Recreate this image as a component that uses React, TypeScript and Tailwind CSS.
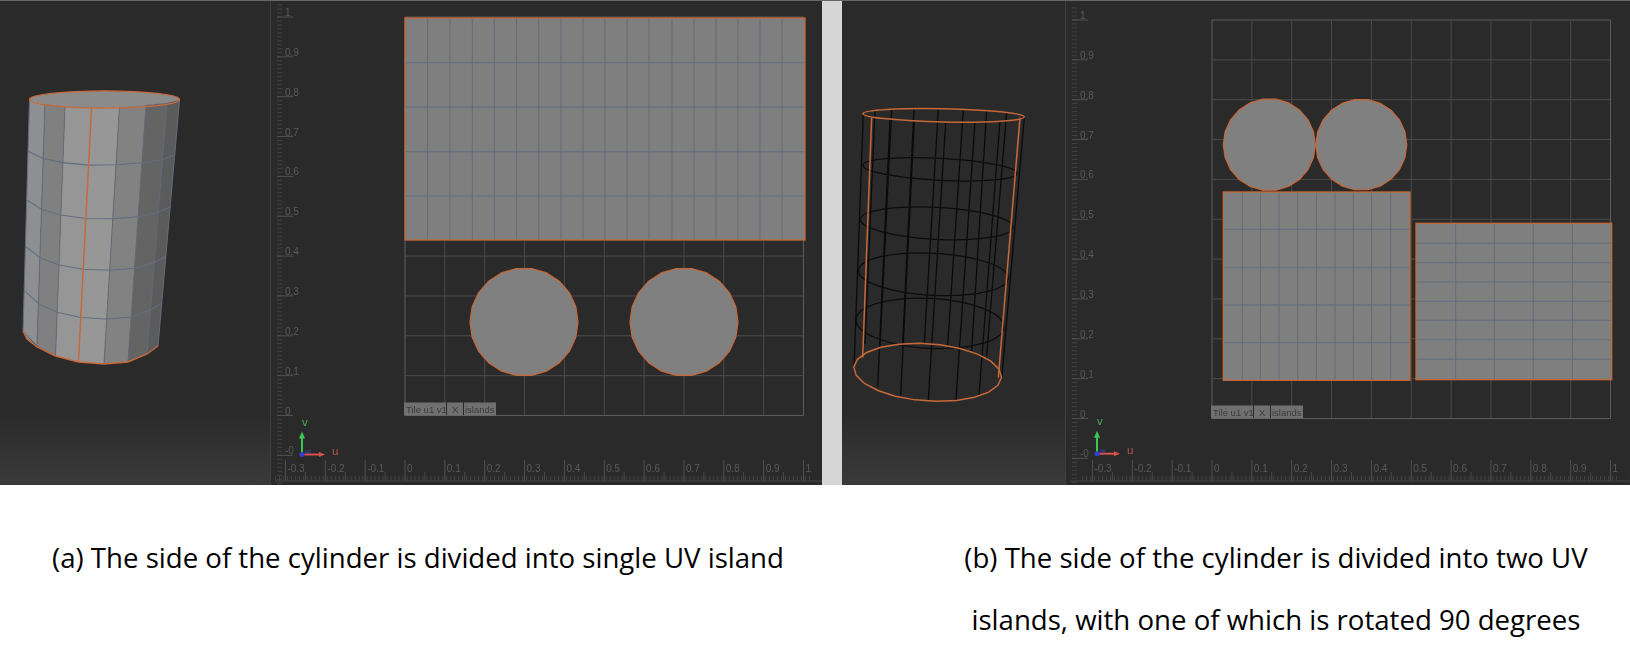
import React from "react";

const ORANGE = "#c9693a";
const BLUE = "#646c7e";

type Pt = [number, number];
const lerp = (a: Pt, b: Pt, t: number): Pt => [a[0] + (b[0] - a[0]) * t, a[1] + (b[1] - a[1]) * t];
const pts = (list: Pt[]) => list.map((p) => p.join(",")).join(" ");

function polygonCircle(cx: number, cy: number, r: number, sides = 22) {
  const out: Pt[] = [];
  for (let i = 0; i < sides; i++) {
    const a = (i / sides) * Math.PI * 2;
    out.push([cx + Math.cos(a) * r, cy + Math.sin(a) * r]);
  }
  return pts(out);
}

const range = (n: number) => [...Array(n).keys()];

// rulers + frame of the uv editor, in panel coordinates
function UvBackdrop({ left, top, panelLeft, bottom, gizmoY }: { left: number; top: number; panelLeft: number; bottom: number; gizmoY: number }) {
  const step = 39.85;
  const size = step * 10;
  const yBase = top + size;
  const labelsY = ["1", "0.9", "0.8", "0.7", "0.6", "0.5", "0.4", "0.3", "0.2", "0.1", "0"];
  const labelsX = ["-0.3", "-0.2", "-0.1", "0", "0.1", "0.2", "0.3", "0.4", "0.5", "0.6", "0.7", "0.8", "0.9", "1"];
  const rulerX = panelLeft + 7;
  const labelX = panelLeft + 15;
  return (
    <g fontFamily="'Liberation Sans', sans-serif" fontSize="10" fill="#5a5a5a">
      <line x1={panelLeft + 0.5} y1={0} x2={panelLeft + 0.5} y2={bottom} stroke="#3f3f3f" />
      {/* vertical ruler */}
      {range(125).map((i) => {
        const y = top - 12 + i * (step / 10);
        return <line key={i} x1={rulerX} x2={rulerX + 5} y1={y} y2={y} stroke="#4a4a4a" strokeWidth="0.8" />;
      })}
      {labelsY.map((l, i) => (
        <g key={l}>
          <line x1={rulerX} x2={rulerX + 16} y1={top + i * step} y2={top + i * step} stroke="#505050" />
          <text x={labelX} y={top + i * step - 1}>{l}</text>
        </g>
      ))}
      <line x1={rulerX} x2={rulerX + 16} y1={yBase + step} y2={yBase + step} stroke="#505050" />
      <text x={labelX} y={yBase + step - 1}>-0</text>
      {/* horizontal ruler */}
      {range(135).map((i) => {
        const x = left - 3 * step + i * (step / 10) - 10;
        return <line key={i} x1={x} x2={x} y1={bottom - 9} y2={bottom - 4} stroke="#4a4a4a" strokeWidth="0.8" />;
      })}
      {range(14).map((i) => (
        <line key={i} x1={left - 3 * step + (i + 0.5) * step} x2={left - 3 * step + (i + 0.5) * step} y1={bottom - 13} y2={bottom - 4} stroke="#4a4a4a" />
      ))}
      {labelsX.map((l, i) => (
        <g key={l}>
          <line x1={left + (i - 3) * step} x2={left + (i - 3) * step} y1={bottom - 25} y2={bottom - 4} stroke="#505050" />
          <text x={left + (i - 3) * step + 2} y={bottom - 13}>{l}</text>
        </g>
      ))}
      <line x1={rulerX - 2} x2={panelLeft + 565} y1={bottom - 4} y2={bottom - 4} stroke="#454545" />
      {/* 0..1 grid */}
      {range(11).map((i) => (
        <g key={i}>
          <line x1={left + i * step} x2={left + i * step} y1={top} y2={yBase} stroke={i === 0 || i === 10 ? "#5c5c5c" : "#4a4a4a"} />
          <line x1={left} x2={left + size} y1={top + i * step} y2={top + i * step} stroke={i === 0 || i === 10 ? "#5c5c5c" : "#4a4a4a"} />
        </g>
      ))}
      {/* axis gizmo */}
      <g transform={`translate(${panelLeft + 32} ${gizmoY})`}>
        <line x1="0" y1="0" x2="0" y2="-18" stroke="#3fc552" strokeWidth="2" />
        <polygon points="-3,-16 3,-16 0,-23" fill="#3fc552" />
        <line x1="0" y1="0" x2="18" y2="0" stroke="#d9504a" strokeWidth="2" />
        <polygon points="17,-2.5 17,2.5 23,0" fill="#d9504a" />
        <circle cx="0" cy="0" r="2.5" fill="#2f3fd0" />
        <text x="3" y="-1" fill="#3a45b0" fontSize="8">w</text>
        <text x="0" y="-29" fill="#4cae58" fontSize="11.5">v</text>
        <text x="30" y="0" fill="#b9504a" fontSize="11.5">u</text>
      </g>
      {/* tile bar */}
      <g fill="#707070">
        <rect x={left - 1} y={yBase - 13} width="42" height="13" />
        <rect x={left + 42} y={yBase - 13} width="16" height="13" />
        <rect x={left + 59} y={yBase - 13} width="32" height="13" />
      </g>
      <g fill="#3b3b3b" fontSize="9.5">
        <text x={left + 1} y={yBase - 3}>Tile u1 v1</text>
        <text x={left + 47} y={yBase - 3}>X</text>
        <text x={left + 60} y={yBase - 3}>islands</text>
      </g>
    </g>
  );
}

// flat island with its interior seams
function Island({ x, y, x2, y2, vs, hs }: { x: number; y: number; x2: number; y2: number; vs: number[]; hs: number[] }) {
  return (
    <g>
      <rect x={x} y={y} width={x2 - x} height={y2 - y} fill="#7f7f7f" />
      {vs.map((v) => <line key={v} x1={v} x2={v} y1={y} y2={y2} stroke={BLUE} strokeWidth="1.1" />)}
      {hs.map((h) => <line key={h} x1={x} x2={x2} y1={h} y2={h} stroke={BLUE} strokeWidth="1.1" />)}
      <rect x={x} y={y} width={x2 - x} height={y2 - y} fill="none" stroke={ORANGE} strokeWidth="1.3" />
    </g>
  );
}

function Disc({ cx, cy, r }: { cx: number; cy: number; r: number }) {
  return <polygon points={polygonCircle(cx, cy, r)} fill="#808080" stroke={ORANGE} strokeWidth="1.2" />;
}

// solid cylinder of the first figure
const solidTop: Pt[] = [[29.5, 98], [45, 103], [65, 105.5], [91.5, 107], [119.5, 106], [146, 104], [167, 102], [179.5, 99]];
const solidBottom: Pt[] = [[23, 330], [37, 345], [55.5, 355], [78.5, 361], [104, 363], [128, 361], [147, 353], [158, 345]];
const solidRim: Pt[] = [[23, 330], [27, 338], [37, 346], [55.5, 355], [78.5, 361], [104, 363], [128, 361], [147, 353], [158, 345]];
const solidShade = ["#8e8f90", "#808080", "#969696", "#979797", "#828282", "#646464", "#5b5b5c"];

function SolidCylinder() {
  return (
    <g>
      <ellipse cx="104.5" cy="98.5" rx="75" ry="8.6" fill="#8b8b8b" />
      {solidShade.map((c, i) => (
        <polygon key={i} points={pts([solidTop[i], solidTop[i + 1], solidBottom[i + 1], solidBottom[i]])} fill={c} />
      ))}
      <polygon points={pts(solidRim.slice(0, 3))} fill="#8e8f90" />
      {[0.225, 0.435, 0.635, 0.825].map((t) => (
        <polyline key={t} points={pts(solidTop.map((p, i) => lerp(p, solidBottom[i], t)))} fill="none" stroke={BLUE} strokeWidth="1.1" />
      ))}
      {solidTop.map((p, i) => i !== 3 && (
        <line key={i} x1={p[0]} y1={p[1]} x2={solidBottom[i][0]} y2={solidBottom[i][1]} stroke={BLUE} strokeWidth="1" />
      ))}
      <line x1="91.5" y1="107" x2="78.5" y2="361" stroke={ORANGE} strokeWidth="1.4" />
      <ellipse cx="104.5" cy="98.5" rx="75" ry="8.6" fill="none" stroke={ORANGE} strokeWidth="1.4" />
      <polyline points={pts(solidRim)} fill="none" stroke={ORANGE} strokeWidth="1.4" />
    </g>
  );
}

// wireframe of the second figure, traced at 3x around (780,60)
const wireLines: [number, number, number, number][] = [
  [250, 160, 222, 920], [285, 146, 255, 850], [330, 175, 293, 978], [335, 146, 300, 855], [403, 182, 362, 1003],
  [402, 145, 368, 848], [497, 184, 445, 1018], [475, 145, 433, 845], [585, 182, 528, 1015], [550, 147, 503, 855],
  [660, 178, 597, 1005], [620, 150, 575, 870], [680, 155, 620, 885], [733, 168, 665, 955],
];
const wireRings = [
  [480, 325, 232, 33], [470, 487, 229, 48], [460, 640, 225, 63], [450, 787, 222, 75],
];

function WireCylinder() {
  return (
    <g transform="translate(780 60) scale(0.3333)">
      {wireLines.map((l, i) => (
        <line key={i} x1={l[0]} y1={l[1]} x2={l[2]} y2={l[3]} stroke="#0a0a0a" strokeWidth="3.8" />
      ))}
      {wireRings.map((r, i) => (
        <ellipse key={i} cx={r[0]} cy={r[1]} rx={r[2]} ry={r[3]} transform={`rotate(3 ${r[0]} ${r[1]})`} fill="none" stroke="#0c0c0c" strokeWidth="3.8" />
      ))}
      <line x1="275" y1="170" x2="248" y2="890" stroke={ORANGE} strokeWidth="4.5" />
      <line x1="720" y1="170" x2="655" y2="950" stroke={ORANGE} strokeWidth="4.5" />
      <ellipse cx="491" cy="163" rx="242" ry="20" transform="rotate(1.2 491 163)" fill="none" stroke={ORANGE} strokeWidth="4.5" />
      <polygon points={polygonCircle(0, 0, 1, 22).split(" ").map((s) => {
        const [px, py] = s.split(",").map(Number);
        return `${443 + px * 222},${934 + py * 86}`;
      }).join(" ")} transform="rotate(4 443 934)" fill="none" stroke={ORANGE} strokeWidth="4.5" />
    </g>
  );
}

function Viewport({ className, viewBox, children }: { className: string; viewBox: string; children: React.ReactNode }) {
  return (
    <div className={`${className} h-full bg-gradient-to-b from-[#2a2a2a] from-[85%] to-[#3a3a3a]`}>
      <svg className="block w-full h-full blur-[0.4px]" viewBox={viewBox}>{children}</svg>
    </div>
  );
}

function UvEditor({ className, viewBox, children }: { className: string; viewBox: string; children: React.ReactNode }) {
  return (
    <div className={`${className} h-full bg-[#2a2a2a]`}>
      <svg className="block w-full h-full blur-[0.4px]" viewBox={viewBox}>{children}</svg>
    </div>
  );
}

export default function App() {
  return (
    <main className="w-[1630px] h-[658px] bg-white overflow-hidden font-['Open_Sans',sans-serif] text-black">
      <div className="flex h-[485px] bg-[#d6d6d6] border-t border-[#666]">
        <section className="flex w-[822px]">
          <Viewport className="w-[270px]" viewBox="0 0 270 484">
            <SolidCylinder />
          </Viewport>
          <UvEditor className="w-[552px]" viewBox="270 0 552 484">
            <UvBackdrop panelLeft={270} left={405} top={16} bottom={484} gizmoY={453.5} />
            <Island x={405} y={17} x2={805} y2={239}
              vs={[427.7, 450, 472.3, 494.3, 516.5, 538.7, 561, 583, 605, 627, 649, 672, 694, 716, 738, 760, 782]}
              hs={[61.7, 106, 150.7, 195]} />
            <Disc cx={524} cy={321} r={54} />
            <Disc cx={684} cy={321} r={54} />
          </UvEditor>
        </section>
        <section className="flex w-[788px] ml-[20px]">
          <Viewport className="w-[223px]" viewBox="842 0 223 484">
            <WireCylinder />
          </Viewport>
          <UvEditor className="w-[565px]" viewBox="1065 0 565 484">
            <UvBackdrop panelLeft={1065} left={1212} top={19} bottom={484} gizmoY={452.7} />
            <Disc cx={1269.3} cy={143.7} r={46} />
            <Disc cx={1361.3} cy={143.7} r={45.5} />
            <Island x={1223.3} y={191} x2={1410} y2={379.3}
              vs={[1242.3, 1260.3, 1279, 1297.7, 1316.3, 1335, 1353.3, 1371.7, 1390.7]}
              hs={[228.3, 266.7, 304, 341.7]} />
            <Island x={1416} y={222.3} x2={1611.7} y2={378.7}
              vs={[1455.7, 1494.3, 1533.3, 1572.3]}
              hs={[242.3, 261.7, 281, 300.3, 319.3, 338.7, 358.3]} />
          </UvEditor>
        </section>
      </div>
      <div className="flex text-[27.6px] leading-[62px] pt-[41px]">
        <p className="w-[836px] text-center">(a) The side of the cylinder is divided into single UV island</p>
        <p className="w-[794px] text-center pl-[86px]">
          (b) The side of the cylinder is divided into two UV<br />
          islands, with one of which is rotated 90 degrees
        </p>
      </div>
    </main>
  );
}
